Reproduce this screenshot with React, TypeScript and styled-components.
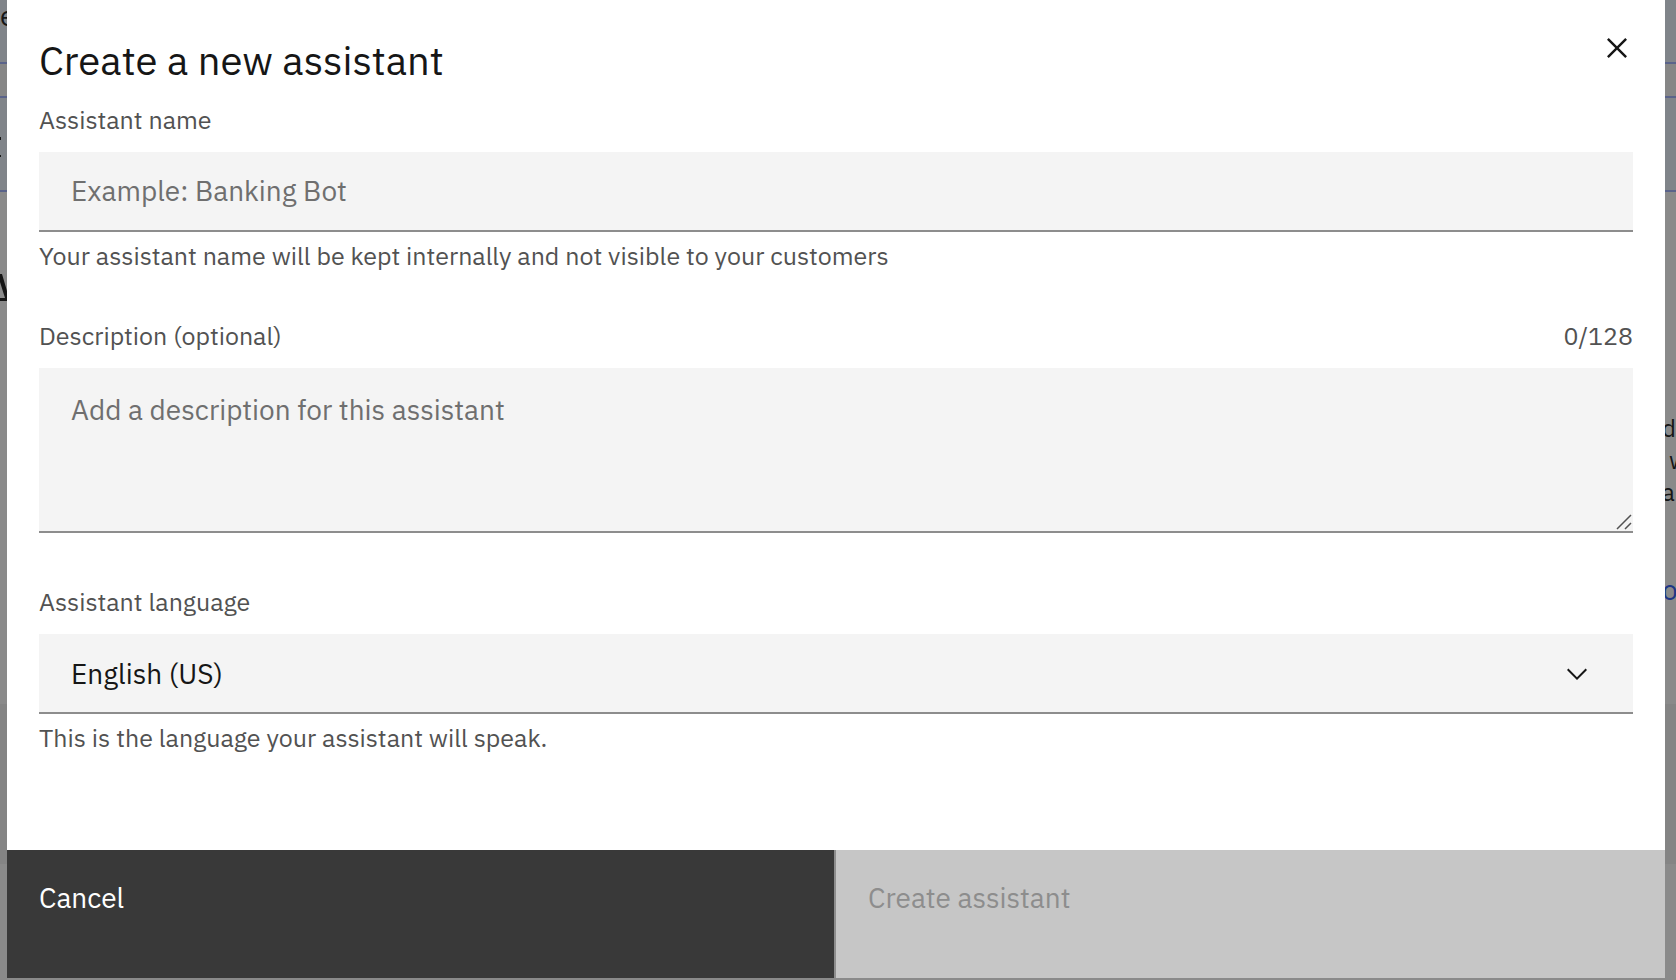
import React, { useState } from 'react';
import styled, { createGlobalStyle } from 'styled-components';

const GlobalStyle = createGlobalStyle`
  *, *::before, *::after { box-sizing: border-box; }
  html, body, #root { height: 100%; }
  body {
    margin: 0;
    background: #8a8a8a;
    color: #161616;
    font-family: 'IBM Plex Sans', 'Open Sans', sans-serif;
  }
  button, input, textarea, select { font: inherit; border-radius: 0; }
`;

const Screen = styled.div`
  position: relative;
  min-height: 100%;
  display: flex;
  padding: 0 11px 2px 7px;
`;

const Page = styled.div`
  position: absolute;
  inset: 0;
  overflow: hidden;
  display: flex;
  flex-direction: column;
  font-size: 24px;
  line-height: 32px;
  color: #161616;
`;

const Band = styled.div<{ $height: number; $tone: string; $ruled?: boolean }>`
  flex: none;
  height: ${(p) => p.$height}px;
  background: ${(p) => p.$tone};
  border-bottom: ${(p) => (p.$ruled ? '2px solid #5a638a' : '0')};
  display: flex;
  justify-content: space-between;
  overflow: hidden;
`;

const HeaderEdge = styled.div`
  font-size: 28px;
`;

const NoticeEdge = styled.div`
  padding-top: 36px;
`;

const HeadingEdge = styled.div`
  padding-top: 80px;
`;

const RightEdge = styled.div`
  width: 14px;
  padding-top: 220px;
  overflow: hidden;
  white-space: nowrap;
`;

const Line = styled.p<{ $indent?: boolean }>`
  margin: 0;
  padding-left: ${(p) => (p.$indent ? 7 : 0)}px;
`;

const PageLink = styled.a`
  display: block;
  padding-top: 66px;
  font-size: 28px;
  color: #1d3685;
  text-decoration: none;
`;

const Modal = styled.section`
  position: relative;
  flex: 1;
  min-width: 0;
  display: flex;
  flex-direction: column;
  background: #ffffff;
`;

const Form = styled.form`
  flex: 1;
  display: flex;
  flex-direction: column;
`;

const Header = styled.header`
  display: flex;
  justify-content: space-between;
  align-items: flex-start;
  padding: 32px 16px 0 32px;
`;

const Title = styled.h1`
  margin: 0;
  font-size: 40px;
  line-height: 56px;
  font-weight: 400;
`;

const CloseButton = styled.button`
  width: 64px;
  height: 32px;
  padding: 0;
  border: 0;
  background: transparent;
  color: #161616;
  display: flex;
  align-items: center;
  justify-content: center;
`;

const Fields = styled.div`
  flex: 1;
  display: flex;
  flex-direction: column;
  gap: 48px;
  padding: 16px 32px 32px;
`;

const Field = styled.div`
  display: flex;
  flex-direction: column;
`;

const LabelRow = styled.div`
  display: flex;
  justify-content: space-between;
  margin-bottom: 16px;
  font-size: 25px;
  line-height: 32px;
  color: #525252;
`;

const Helper = styled.p`
  margin: 8px 0 0;
  font-size: 25px;
  line-height: 32px;
  color: #525252;
`;

const TextInput = styled.input`
  width: 100%;
  height: 80px;
  padding: 0 32px 2px;
  border: 0;
  border-bottom: 2px solid #8d8d8d;
  outline: none;
  background: #f4f4f4;
  color: #161616;
  font-size: 28px;
  &::placeholder { color: #6f6f6f; opacity: 1; }
`;

const TextAreaWrap = styled.div`
  position: relative;
  display: flex;
  margin-bottom: 5px;
`;

const TextArea = styled.textarea`
  flex: 1;
  height: 165px;
  padding: 22px 32px;
  border: 0;
  border-bottom: 2px solid #8d8d8d;
  outline: none;
  resize: none;
  background: #f4f4f4;
  color: #161616;
  font-size: 28px;
  line-height: 40px;
  &::placeholder { color: #6f6f6f; opacity: 1; }
`;

const ResizeGrip = styled.svg`
  position: absolute;
  right: 1px;
  bottom: 3px;
  pointer-events: none;
`;

const SelectWrap = styled.div`
  position: relative;
  display: flex;
`;

const Select = styled.select`
  flex: 1;
  height: 80px;
  padding: 0 96px 0 32px;
  border: 0;
  border-bottom: 2px solid #8d8d8d;
  outline: none;
  appearance: none;
  background: #f4f4f4;
  color: #161616;
  font-size: 28px;
`;

const Chevron = styled.svg`
  position: absolute;
  right: 40px;
  top: 24px;
  pointer-events: none;
`;

const Footer = styled.footer`
  display: grid;
  grid-template-columns: 1fr 1fr;
  height: 128px;
`;

const FooterButton = styled.button<{ $kind: 'secondary' | 'primary' }>`
  padding: 28px 32px;
  border: 0;
  border-right: ${(p) => (p.$kind === 'secondary' ? '2px solid #8d8d8d' : '0')};
  background: ${(p) => (p.$kind === 'primary' ? '#c6c6c6' : '#393939')};
  color: ${(p) => (p.$kind === 'primary' ? '#8d8d8d' : '#ffffff')};
  display: flex;
  align-items: flex-start;
  text-align: left;
  font-size: 28px;
  line-height: 40px;
`;

function UnderlyingPage() {
  return (
    <Page aria-hidden="true">
      <Band $height={64} $tone="#808489" $ruled>
        <HeaderEdge>e</HeaderEdge>
      </Band>
      <Band $height={34} $tone="#868686" $ruled />
      <Band $height={94} $tone="#808489" $ruled>
        <NoticeEdge>
          <svg width="7" height="22" viewBox="0 0 7 22">
            <path d="M0 0h1v3H0zM0 18h1v2H0z" fill="#161616" />
          </svg>
        </NoticeEdge>
      </Band>
      <Band $height={512} $tone="#8a8a8a">
        <HeadingEdge>
          <svg width="7" height="32" viewBox="0 0 7 32">
            <path d="M0 2H2L7 19V29H0V26H5L0 10Z" fill="#161616" />
          </svg>
        </HeadingEdge>
        <RightEdge>
          <Line>d</Line>
          <Line $indent>w</Line>
          <Line>a</Line>
          <PageLink href="#more">or</PageLink>
        </RightEdge>
      </Band>
      <Band $height={160} $tone="#848484" />
    </Page>
  );
}

export default function App() {
  const [name, setName] = useState('');
  const [description, setDescription] = useState('');
  return (
    <>
      <GlobalStyle />
      <Screen>
        <UnderlyingPage />
        <Modal role="dialog" aria-modal="true" aria-labelledby="modal-title">
          <Form onSubmit={(e) => e.preventDefault()}>
            <Header>
              <Title id="modal-title">Create a new assistant</Title>
              <CloseButton type="button" aria-label="Close">
                <svg width="40" height="40" viewBox="0 0 32 32" fill="currentColor">
                  <path d="M24 9.4 22.6 8 16 14.6 9.4 8 8 9.4l6.6 6.6L8 22.6 9.4 24l6.6-6.6 6.6 6.6 1.4-1.4-6.6-6.6L24 9.4z" />
                </svg>
              </CloseButton>
            </Header>
            <Fields>
              <Field>
                <LabelRow>
                  <label htmlFor="name">Assistant name</label>
                </LabelRow>
                <TextInput
                  id="name"
                  placeholder="Example: Banking Bot"
                  aria-describedby="name-help"
                  value={name}
                  onChange={(e) => setName(e.target.value)}
                />
                <Helper id="name-help">
                  Your assistant name will be kept internally and not visible to your customers
                </Helper>
              </Field>
              <Field>
                <LabelRow>
                  <label htmlFor="description">Description (optional)</label>
                  <span>{description.length}/128</span>
                </LabelRow>
                <TextAreaWrap>
                  <TextArea
                    id="description"
                    maxLength={128}
                    placeholder="Add a description for this assistant"
                    value={description}
                    onChange={(e) => setDescription(e.target.value)}
                  />
                  <ResizeGrip width="16" height="16" viewBox="0 0 16 16" fill="none" stroke="#525252" strokeWidth="1.5">
                    <path d="M1 15 15 1M9 15l6-6" />
                  </ResizeGrip>
                </TextAreaWrap>
              </Field>
              <Field>
                <LabelRow>
                  <label htmlFor="language">Assistant language</label>
                </LabelRow>
                <SelectWrap>
                  <Select id="language" aria-describedby="language-help" defaultValue="en-us">
                    <option value="en-us">English (US)</option>
                  </Select>
                  <Chevron width="32" height="32" viewBox="0 0 16 16" fill="#161616">
                    <path d="M8 11 3 6l.7-.7L8 9.600l4.300-4.300.7.7z" />
                  </Chevron>
                </SelectWrap>
                <Helper id="language-help">This is the language your assistant will speak.</Helper>
              </Field>
            </Fields>
            <Footer>
              <FooterButton type="button" $kind="secondary">Cancel</FooterButton>
              <FooterButton type="submit" $kind="primary" disabled={!name}>Create assistant</FooterButton>
            </Footer>
          </Form>
        </Modal>
      </Screen>
    </>
  );
}
